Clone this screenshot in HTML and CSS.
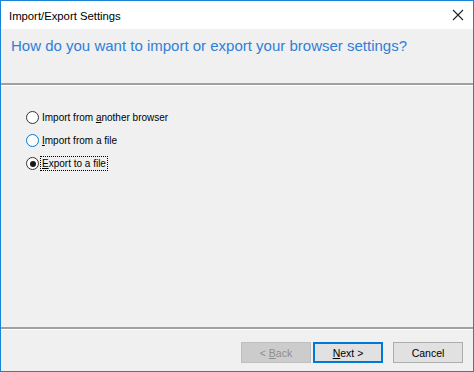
FILE: index.html
```html
<!DOCTYPE html>
<html lang="en">
<head>
<meta charset="UTF-8">
<title>Import/Export Settings</title>
<link rel="stylesheet" href="styles.css">
</head>
<body>
<div class="window">
    <div class="titlebar">
        <span class="title">Import/Export Settings</span>
        <svg class="close" width="12" height="12" viewBox="0 0 12 12">
            <path d="M1 1 L11 11 M11 1 L1 11" stroke="#222" stroke-width="1.1" fill="none"/>
        </svg>
    </div>
    <div class="header">
        <h1>How do you want to import or export your browser settings?</h1>
    </div>
    <div class="sep"></div>
    <div class="content">
        <label class="option">
            <span class="radio"></span>
            <span class="label">Import from <u>a</u>nother browser</span>
        </label>
        <label class="option">
            <span class="radio hover"></span>
            <span class="label"><u>I</u>mport from a file</span>
        </label>
        <label class="option">
            <span class="radio checked"></span>
            <span class="label focus"><u>E</u>xport to a file</span>
        </label>
    </div>
    <div class="sep"></div>
    <div class="footer">
        <button class="btn disabled">&lt; <u>B</u>ack</button>
        <button class="btn default"><u>N</u>ext &gt;</button>
        <button class="btn cancel">Cancel</button>
    </div>
</div>
</body>
</html>
```

FILE: styles.css
```css
body {
    margin: 0;
    padding: 0;
    font-family: "Liberation Sans", Arial, sans-serif;
    font-size: 12px;
    color: #000;
}
.window {
    box-sizing: border-box;
    width: 474px;
    height: 372px;
    border: 1px solid #1883d7;
    background: #f0f0f0;
    display: flex;
    flex-direction: column;
}
.titlebar {
    height: 28px;
    background: #fff;
    display: flex;
    align-items: center;
    justify-content: space-between;
    padding: 0 8px 0 8px;
}
.title {
    font-size: 11.3px;
    padding-top: 1px;
}
.close {
    margin-right: 1px;
}
.header {
    height: 54px;
    box-sizing: border-box;
    padding: 8px 10px 0 10px;
}
h1 {
    margin: 0;
    font-size: 15px;
    font-weight: normal;
    color: #2f7fd8;
}
.sep {
    height: 2px;
    background: #a0a0a0;
    border-bottom: 1px solid #fff;
}
.content {
    flex: 1;
    padding: 20px 0 0 25px;
    display: flex;
    flex-direction: column;
}
.option {
    display: flex;
    align-items: center;
    height: 23px;
    font-size: 10px;
}
.radio {
    box-sizing: border-box;
    width: 13px;
    height: 13px;
    border: 1px solid #333;
    border-radius: 50%;
    background: #fff;
    margin-right: 3px;
    display: flex;
    align-items: center;
    justify-content: center;
}
.radio.hover {
    border-color: #0078d7;
}
.radio.checked::after {
    content: "";
    width: 6px;
    height: 6px;
    border-radius: 50%;
    background: #1a1a1a;
}
.label.focus {
    outline: 1px dotted #000;
    outline-offset: 0;
    padding: 1px 1px;
    margin-left: -1px;
}
.footer {
    height: 41px;
    box-sizing: border-box;
    display: flex;
    justify-content: flex-end;
    align-items: flex-start;
    padding: 12px 10px 0 0;
    gap: 2px;
}
.btn {
    box-sizing: border-box;
    width: 70px;
    height: 21px;
    font-family: inherit;
    font-size: 10.5px;
    background: #e1e1e1;
    border: 1px solid #adadad;
    padding: 0;
    color: #000;
}
.btn.disabled {
    background: #cccccc;
    border-color: #bfbfbf;
    color: #8d8d8d;
}
.btn.default {
    border: 2px solid #0078d7;
}
.btn.cancel {
    margin-left: 8px;
}
```
